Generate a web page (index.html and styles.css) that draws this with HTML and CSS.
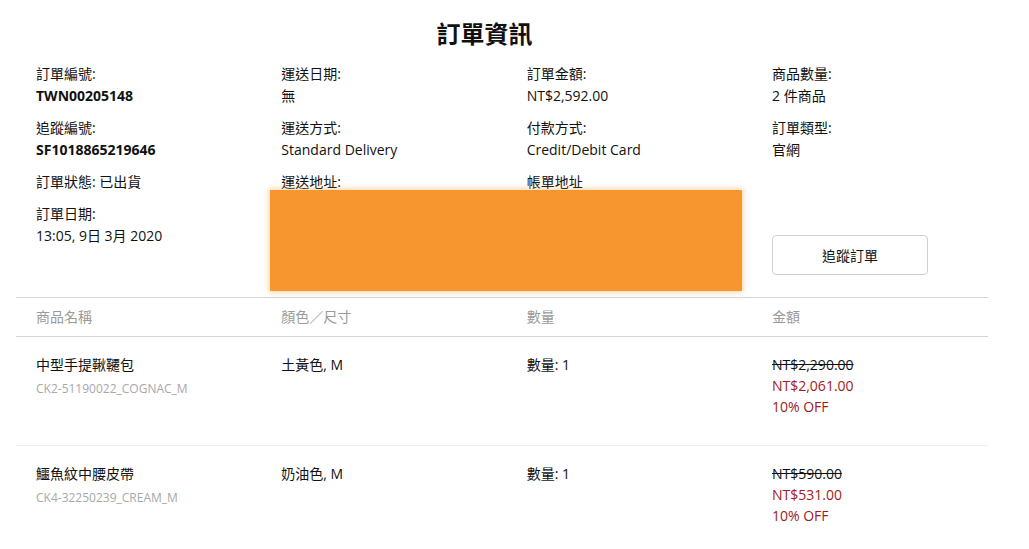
FILE: index.html
```html
<!DOCTYPE html>
<html lang="zh-Hant">
<head>
<meta charset="utf-8">
<title>訂單資訊</title>
<link rel="stylesheet" href="styles.css">
</head>
<body>
<main class="page">
  <h1 class="title">訂單資訊</h1>

  <section class="info">
    <div class="col">
      <div class="field"><div class="label">訂單編號:</div><div class="value strong">TWN00205148</div></div>
      <div class="field"><div class="label">追蹤編號:</div><div class="value strong">SF1018865219646</div></div>
      <div class="field"><div class="label">訂單狀態: 已出貨</div></div>
      <div class="field"><div class="label">訂單日期:</div><div class="value">13:05, 9日 3月 2020</div></div>
    </div>
    <div class="col">
      <div class="field"><div class="label">運送日期:</div><div class="value">無</div></div>
      <div class="field"><div class="label">運送方式:</div><div class="value">Standard Delivery</div></div>
      <div class="field"><div class="label">運送地址:</div></div>
    </div>
    <div class="col">
      <div class="field"><div class="label">訂單金額:</div><div class="value">NT$2,592.00</div></div>
      <div class="field"><div class="label">付款方式:</div><div class="value">Credit/Debit Card</div></div>
      <div class="field"><div class="label">帳單地址</div></div>
    </div>
    <div class="col">
      <div class="field"><div class="label">商品數量:</div><div class="value">2 件商品</div></div>
      <div class="field"><div class="label">訂單類型:</div><div class="value">官網</div></div>
      <button class="track-btn" type="button">追蹤訂單</button>
    </div>
    <div class="redact"></div>
  </section>

  <section class="items">
    <div class="row head">
      <div>商品名稱</div>
      <div>顏色／尺寸</div>
      <div>數量</div>
      <div>金額</div>
    </div>
    <div class="row item">
      <div><div class="name">中型手提鞦韆包</div><div class="sku">CK2-51190022_COGNAC_M</div></div>
      <div>土黃色, M</div>
      <div>數量: 1</div>
      <div class="prices"><div class="old">NT$2,290.00</div><div class="sale">NT$2,061.00</div><div class="sale">10% OFF</div></div>
    </div>
    <div class="row item">
      <div><div class="name">鱷魚紋中腰皮帶</div><div class="sku">CK4-32250239_CREAM_M</div></div>
      <div>奶油色, M</div>
      <div>數量: 1</div>
      <div class="prices"><div class="old">NT$590.00</div><div class="sale">NT$531.00</div><div class="sale">10% OFF</div></div>
    </div>
  </section>
</main>
</body>
</html>
```

FILE: styles.css
```css
* { box-sizing: border-box; }

html, body {
  margin: 0;
  background: #fff;
}

body {
  font-family: "Open Sans", "Noto Sans CJK TC", sans-serif;
  font-size: 14px;
  line-height: 22px;
  color: #111;
}

.page {
  padding: 17px 41px 0 16px;
}

.title {
  margin: 0;
  padding-right: 35px;
  text-align: center;
  font-size: 24px;
  line-height: 32px;
  font-weight: 700;
  font-family: "Noto Sans CJK TC", sans-serif;
}

/* order summary: four columns of label/value pairs */
.info {
  position: relative;
  display: grid;
  grid-template-columns: repeat(4, 245.33px);
  margin-top: 14px;
  padding: 0 0 22px 20px;
  border-bottom: 1px solid #d4d4d4;
}

.col {
  display: flex;
  flex-direction: column;
  gap: 10px;
}

.label, .value {
  white-space: nowrap;
}

.strong {
  font-weight: 700;
}

.track-btn {
  margin-top: 64px;
  width: 156px;
  height: 40px;
  border: 1px solid #d0d0d0;
  border-radius: 4px;
  background: #fff;
  font-family: "Noto Sans CJK TC", sans-serif;
  font-size: 14px;
  color: #111;
  cursor: pointer;
}

/* address block masked out */
.redact {
  position: absolute;
  left: 254px;
  top: 127px;
  width: 472px;
  height: 101px;
  background: #f7962f;
  box-shadow: 0 0 6px 1px rgba(247, 150, 47, 0.45);
}

/* line items table */
.row {
  display: grid;
  grid-template-columns: repeat(4, 245.33px);
  padding-left: 20px;
}

.row.head {
  padding-top: 8px;
  padding-bottom: 8px;
  color: #9a9a9a;
  border-bottom: 1px solid #d4d4d4;
}

.row.item {
  padding-top: 17px;
  padding-bottom: 28px;
  border-bottom: 1px solid #eeeeee;
}

.sku {
  margin-top: 3px;
  font-size: 12px;
  line-height: 20px;
  color: #a8a8a8;
}

.prices {
  line-height: 21px;
}

.old {
  text-decoration: line-through;
  color: #111;
}

.sale {
  color: #a31920;
}
```
